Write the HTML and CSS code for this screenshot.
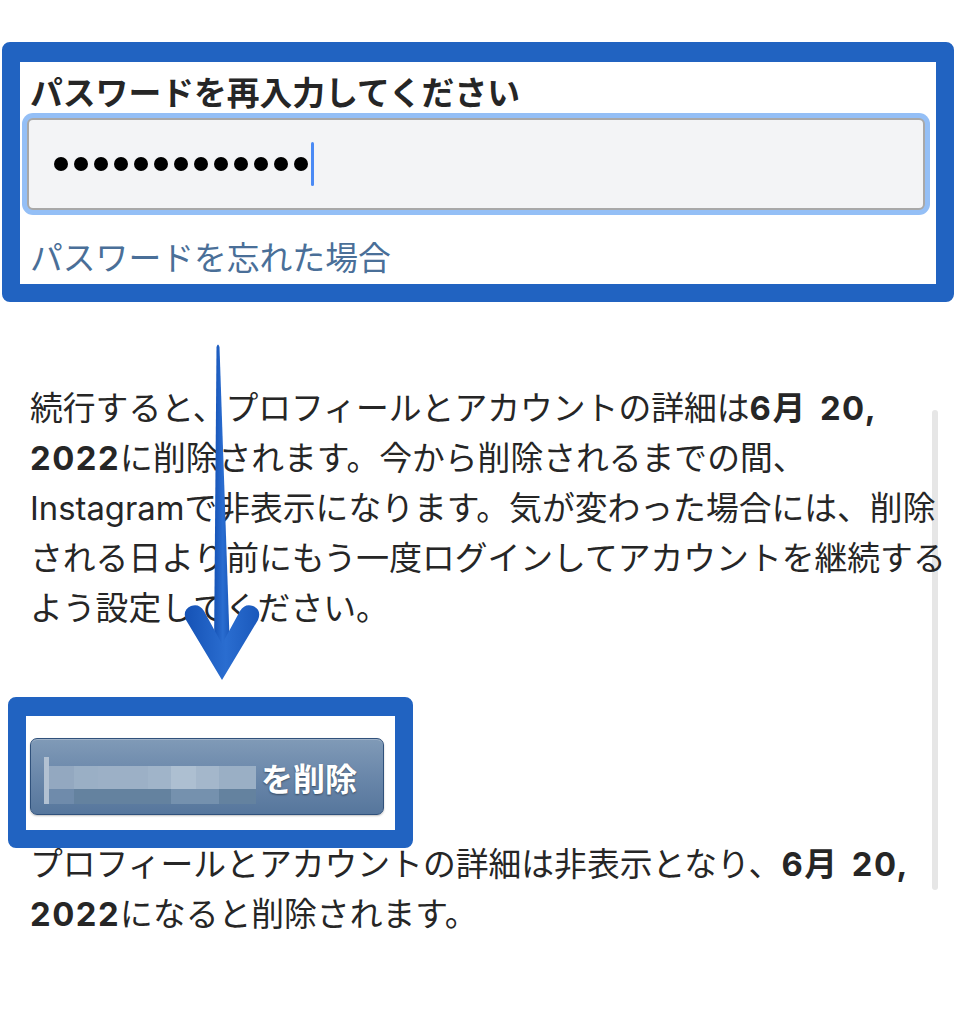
FILE: index.html
```html
<!DOCTYPE html>
<html lang="ja">
<head>
<meta charset="utf-8">
<title>アカウントの削除</title>
<link rel="stylesheet" href="styles.css">
</head>
<body>
<div class="page">
  <div class="scrollbar"></div>

  <section class="frame pw-frame">
    <div class="frame-inner pw-inner">
      <label class="pw-label">パスワードを再入力してください</label>
      <div class="pw-ring">
        <div class="pw-input">
          <span class="dots">
            <i></i><i></i><i></i><i></i><i></i><i></i><i></i><i></i><i></i><i></i><i></i><i></i><i></i>
          </span>
          <span class="caret"></span>
        </div>
      </div>
      <a class="forgot">パスワードを忘れた場合</a>
    </div>
  </section>

  <p class="info first">続行すると、プロフィールとアカウントの詳細は<b>6月 20,</b><br><b>2022</b>に削除されます。今から削除されるまでの間、<br>Instagramで非表示になります。気が変わった場合には、削除<br>される日より前にもう一度ログインしてアカウントを継続する<br>よう設定してください。</p>

  <section class="frame btn-frame">
    <div class="frame-inner btn-inner">
      <button class="delete-btn">
        <span class="mosaic">
          <i class="s"></i><i class="a"></i><i class="a"></i><i class="a"></i><i class="a"></i><i class="a"></i><i class="a"></i><i class="a"></i><i class="a"></i>
          <i class="s"></i><i class="b1"></i><i class="b2"></i><i class="b3"></i><i class="b3"></i><i class="b4"></i><i class="b5"></i><i class="b6"></i><i class="b2"></i>
          <i class="s"></i><i class="c1"></i><i class="c0"></i><i class="c0"></i><i class="c0"></i><i class="c0"></i><i class="c2"></i><i class="c2"></i><i class="c0"></i>
        </span>
        <span class="btn-label">を削除</span>
      </button>
    </div>
  </section>

  <p class="info note">プロフィールとアカウントの詳細は非表示となり、<b>6月 20,</b><br><b>2022</b>になると削除されます。</p>

  <svg class="arrow" width="90" height="360" viewBox="0 0 90 360">
    <defs>
      <linearGradient id="ag" x1="0" y1="0" x2="1" y2="0">
        <stop offset="0" stop-color="#1552b5"/>
        <stop offset="0.55" stop-color="#2a6dd0"/>
        <stop offset="1" stop-color="#1a58bb"/>
      </linearGradient>
    </defs>
    <path d="M36.5,17 Q38,12 39.5,17 L50,322 L34,322 Z" fill="url(#ag)"/>
    <path d="M42,350 L6,290 Q2,280 11,276 Q19,273 24,281 L42,314 L60,281 Q65,273 73,276 Q82,280 78,290 Z" fill="url(#ag)"/>
  </svg>
</div>
</body>
</html>
```

FILE: styles.css
```css
* { box-sizing: border-box; }

html, body {
  margin: 0;
  padding: 0;
  background: #ffffff;
}

body {
  font-family: "Inter", "Noto Sans CJK JP", "Noto Sans", sans-serif;
  color: #262626;
}

.page {
  position: relative;
  width: 957px;
  min-height: 1024px;
  overflow: hidden;
  padding-top: 42px;
}

.frame {
  position: relative;
  z-index: 1;
  border: 18px solid #2163c1;
  border-radius: 8px;
  background: #ffffff;
}

.pw-frame {
  margin-left: 2px;
  width: 952px;
  border-top-width: 20px;
}

.pw-inner {
  display: flex;
  flex-direction: column;
  align-items: flex-start;
  padding: 11px 6px 6px 2px;
}

.pw-label {
  font-size: 32.8px;
  line-height: 40px;
  font-weight: 700;
  padding-left: 8px;
  white-space: nowrap;
}

.pw-ring {
  align-self: stretch;
  padding: 5px;
  background: #94bff6;
  border-radius: 11px;
}

.pw-input {
  display: flex;
  align-items: center;
  height: 92px;
  padding-left: 25px;
  background: #f3f4f6;
  border: 2px solid #a8a8a8;
  border-radius: 6px;
}

.dots {
  display: flex;
  gap: 6px;
}

.dots i {
  display: block;
  width: 14px;
  height: 14px;
  border-radius: 50%;
  background: #000000;
}

.caret {
  display: block;
  width: 3px;
  height: 44px;
  margin-left: 3px;
  border-radius: 2px;
  background: #4a8af5;
}

.forgot {
  margin-top: 23px;
  padding-left: 8px;
  font-size: 32.8px;
  line-height: 40px;
  color: #4a6f98;
  white-space: nowrap;
}

.info {
  position: relative;
  z-index: 1;
  margin: 0;
  padding-left: 30px;
  font-size: 32.8px;
  line-height: 50px;
  white-space: nowrap;
}

.info b {
  font-weight: 700;
  letter-spacing: 1.5px;
  word-spacing: 4px;
}

.info.first {
  margin-top: 81px;
}

.btn-frame {
  margin-top: 64px;
  margin-left: 8px;
  width: 405px;
  border-top-width: 19px;
}

.btn-inner {
  padding: 22px 11px 15px 4px;
}

.delete-btn {
  display: flex;
  align-items: center;
  width: 100%;
  height: 77px;
  padding: 0 0 0 13px;
  border: 1.5px solid #30517b;
  border-radius: 7px;
  background: linear-gradient(#809ab7, #6a87aa 50%, #56769c);
  box-shadow: inset 0 1px 0 rgba(255,255,255,0.25), 0 1px 2px rgba(0,0,0,0.25);
  font-family: "Noto Sans CJK JP", sans-serif;
  cursor: pointer;
}

.mosaic {
  display: grid;
  grid-template-columns: 5px 25px 24px 25px 25px 23px 25px 23px 37px;
  grid-template-rows: 9px 23px 15px;
  width: 212px;
  margin-top: 8px;
}

.mosaic i { display: block; }
.mosaic .s { background: #b2c1d2; }
.mosaic .a { background: transparent; }
.mosaic .b1 { background: #93a8c0; }
.mosaic .b2 { background: #9aafc5; }
.mosaic .b3 { background: #9cb0c6; }
.mosaic .b4 { background: #a0b4c9; }
.mosaic .b5 { background: #adbfd1; }
.mosaic .b6 { background: #a4b7cb; }
.mosaic .c0 { background: #64829f; }
.mosaic .c1 { background: #6f8bab; }
.mosaic .c2 { background: #7591ae; }

.btn-label {
  margin-left: 5px;
  font-size: 32px;
  font-weight: 700;
  color: #ffffff;
  text-shadow: 0 1px 2px rgba(0,0,0,0.45);
  white-space: nowrap;
}

.info.note {
  margin-top: -9px;
}

.scrollbar {
  position: absolute;
  z-index: 0;
  left: 932px;
  top: 410px;
  width: 6px;
  height: 480px;
  border-radius: 3px;
  background: #e6e6e6;
}

.arrow {
  position: absolute;
  z-index: 2;
  left: 180px;
  top: 330px;
}
```
